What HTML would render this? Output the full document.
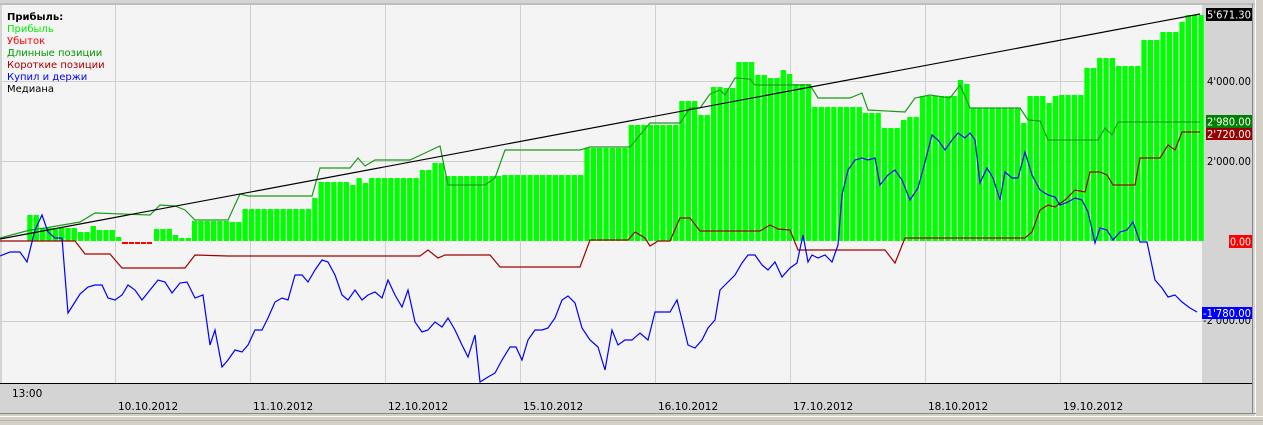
<!DOCTYPE html>
<html><head><meta charset="utf-8"><style>
body{margin:0;width:1263px;height:425px;overflow:hidden;background:#d4d0c8;font-family:"DejaVu Sans","Liberation Sans",sans-serif}
svg{position:absolute;left:0;top:0}
</style></head><body>
<svg id="s" width="1263" height="425" xmlns="http://www.w3.org/2000/svg" font-family="DejaVu Sans, Liberation Sans, sans-serif" font-size="10">
<rect x="0" y="0" width="1263" height="425" fill="#d4d0c8"/>
<rect x="0" y="0" width="1255" height="413" fill="#d4d4d4"/>
<line x1="0" y1="4" x2="1255" y2="4" fill="none" stroke="#a8a8a8"/>
<rect x="2" y="5" width="1200" height="378" fill="#f4f4f4"/>
<g stroke="#d0d0d0" stroke-width="1">
<line x1="115.5" y1="5" x2="115.5" y2="383"/><line x1="250.5" y1="5" x2="250.5" y2="383"/><line x1="385.5" y1="5" x2="385.5" y2="383"/><line x1="520.5" y1="5" x2="520.5" y2="383"/><line x1="655.5" y1="5" x2="655.5" y2="383"/><line x1="790.5" y1="5" x2="790.5" y2="383"/><line x1="925.5" y1="5" x2="925.5" y2="383"/><line x1="1060.5" y1="5" x2="1060.5" y2="383"/>
<line x1="2" y1="81.5" x2="1202" y2="81.5"/><line x1="2" y1="161.5" x2="1202" y2="161.5"/><line x1="2" y1="321.5" x2="1202" y2="321.5"/>
</g>
<g id="bars" fill="#00ff00"></g>
<g stroke="#ff0000" stroke-width="2"><line x1="122" y1="243" x2="128" y2="243"/><line x1="129" y1="243" x2="134" y2="243"/><line x1="135" y1="243" x2="140" y2="243"/><line x1="141" y1="243" x2="146" y2="243"/><line x1="147" y1="243" x2="152" y2="243"/></g>
<polyline id="g" fill="none" stroke="#1a9a1a" stroke-width="1.2"/>
<polyline id="r" fill="none" stroke="#a00000" stroke-width="1.2"/>
<polyline id="b" fill="none" stroke="#0000ff" stroke-width="1.2"/>
<line x1="0" y1="239" x2="1200" y2="14" stroke="#000" stroke-width="1.2"/>
<line x1="0" y1="383.5" x2="1252" y2="383.5" stroke="#000"/>
<line x1="1252.5" y1="4" x2="1252.5" y2="413" stroke="#888"/>
<line x1="1255.5" y1="0" x2="1255.5" y2="416" stroke="#fff"/>
<line x1="0" y1="413.5" x2="1256" y2="413.5" stroke="#888"/>
<line x1="0" y1="416.5" x2="1263" y2="416.5" stroke="#fff"/>
<line x1="0" y1="420.5" x2="1263" y2="420.5" stroke="#b8b4ac"/>
<g>
<text x="7" y="20" font-weight="bold" fill="#000">Прибыль:</text>
<text x="7" y="32" fill="#00ee00">Прибыль</text>
<text x="7" y="44" fill="#ff0000">Убыток</text>
<text x="7" y="56" fill="#009900">Длинные позиции</text>
<text x="7" y="68" fill="#aa0000">Короткие позиции</text>
<text x="7" y="80" fill="#0000ff">Купил и держи</text>
<text x="7" y="92" fill="#000">Медиана</text>
</g>
<g font-size="10.5">
<rect x="1206" y="8" width="46" height="13" fill="#000"/><text x="1207" y="18.5" textLength="44" lengthAdjust="spacingAndGlyphs" fill="#fff">5'671.30</text>
<text x="1207" y="85" textLength="44" lengthAdjust="spacingAndGlyphs" fill="#000">4'000.00</text>
<rect x="1206" y="115" width="46" height="13" fill="#008000"/><text x="1207" y="125.5" textLength="44" lengthAdjust="spacingAndGlyphs" fill="#fff">2'980.00</text>
<rect x="1206" y="128" width="46" height="12" fill="#990000"/><text x="1207" y="138" textLength="44" lengthAdjust="spacingAndGlyphs" fill="#fff">2'720.00</text>
<text x="1207" y="165" textLength="44" lengthAdjust="spacingAndGlyphs" fill="#000">2'000.00</text>
<rect x="1229" y="235" width="23" height="13" fill="#ff0000"/><text x="1230" y="245.5" textLength="21" lengthAdjust="spacingAndGlyphs" fill="#fff">0.00</text>
<text x="1203" y="324" textLength="48" lengthAdjust="spacingAndGlyphs" fill="#000">-2'000.00</text>
<rect x="1202" y="307" width="50" height="12" fill="#0000ff"/><text x="1203" y="317" textLength="48" lengthAdjust="spacingAndGlyphs" fill="#fff">-1'780.00</text>
</g>
<g font-size="10.5" fill="#000">
<text x="12" y="397">13:00</text>
<text x="118" y="410">10.10.2012</text><text x="253" y="410">11.10.2012</text><text x="388" y="410">12.10.2012</text><text x="523" y="410">15.10.2012</text><text x="658" y="410">16.10.2012</text><text x="793" y="410">17.10.2012</text><text x="928" y="410">18.10.2012</text><text x="1063" y="410">19.10.2012</text>
</g>
</svg>
<script>
var R=[[28,42,215],[42,80,228],[80,88,232],[88,95,226],[95,115,230],[115,120,237],[120,155,241],[155,175,229],[175,182,235],[182,195,238],[195,230,221],[230,245,222],[245,310,209],[310,320,198],[320,350,182],[350,358,185],[358,365,178],[365,372,183],[372,420,178],[420,430,170],[430,448,163],[448,500,176],[500,585,175],[585,630,148],[630,650,125],[650,680,125],[680,697,101],[697,710,115],[710,722,87],[722,735,88],[735,755,62],[755,770,75],[770,778,78],[778,790,70],[790,796,74],[796,815,84],[815,860,107],[860,880,113],[880,900,128],[900,906,120],[906,920,117],[920,955,96],[955,965,80],[965,970,84],[970,1022,108],[1022,1030,123],[1030,1044,96],[1044,1050,103],[1050,1062,96],[1062,1085,95],[1085,1097,68],[1097,1117,58],[1117,1142,66],[1142,1160,40],[1160,1178,32],[1178,1184,22],[1184,1202,15]];
var s="",p=6.33;
for(var x=2;x<1202;x+=p){var c=x+p/2,h=null;for(var i=0;i<R.length;i++)if(c>=R[i][0]&&c<R[i][1]){h=R[i][2];break;}
if(h!==null&&h<241)s+='<rect x="'+x.toFixed(1)+'" y="'+h+'" width="'+(p-1).toFixed(2)+'" height="'+(241-h)+'"/>';}
document.getElementById('bars').innerHTML=s;
document.getElementById('g').setAttribute('points',"0,238 30,230 45,228 80,222 95,213 150,215 160,205 175,206 185,210 195,220 228,220 240,194 248,196 312,196 320,168 350,168 358,158 365,166 375,160 410,160 425,153 440,146 448,185 485,185 495,178 505,150 580,150 590,147 630,147 650,123 680,123 690,108 700,108 710,94 720,90 725,95 735,78 750,79 755,85 810,85 818,98 850,98 862,93 868,110 905,112 915,98 930,95 950,98 960,85 970,108 1020,108 1028,120 1040,121 1048,140 1098,140 1105,128 1112,135 1118,122 1200,122");
document.getElementById('r').setAttribute('points',"0,241 75,241 85,254 110,254 122,268 185,268 195,255 228,256 420,256 428,250 438,258 445,255 490,255 500,267 580,267 590,240 628,240 635,232 645,238 650,246 658,241 670,241 680,218 690,218 700,231 760,231 770,225 778,229 790,230 798,250 885,250 895,263 905,238 1025,238 1032,232 1040,210 1048,205 1055,207 1065,200 1075,190 1085,192 1090,172 1100,172 1107,175 1113,185 1135,185 1140,158 1160,158 1168,145 1175,150 1182,132 1200,132");
document.getElementById('b').setAttribute('points',"0,256 10,252 20,252 27,262 35,230 42,215 48,232 55,238 62,238 68,313 75,302 80,294 88,287 95,285 102,285 108,298 115,300 122,295 128,285 135,290 142,300 150,290 158,280 165,282 172,293 180,283 187,282 195,298 203,295 210,345 215,330 222,367 228,360 235,350 242,352 248,345 255,330 262,330 268,318 275,302 282,298 288,300 295,275 302,275 308,282 315,270 322,260 328,262 335,275 342,295 348,300 355,290 362,300 368,295 375,292 382,298 388,280 395,295 402,307 408,290 415,322 422,332 428,330 435,322 442,327 448,318 455,330 462,345 468,357 475,335 480,382 488,377 495,373 502,360 510,347 516,347 522,360 528,340 535,330 542,330 548,328 555,318 562,300 568,296 575,303 582,328 590,340 598,347 605,370 612,330 618,345 625,340 632,340 640,333 648,340 655,312 662,312 670,312 677,300 682,320 688,345 695,348 702,340 708,328 715,320 720,290 728,282 735,275 742,263 748,255 755,255 762,265 768,270 775,262 782,277 790,268 797,263 803,235 808,262 812,255 818,258 825,255 832,262 838,245 842,195 848,170 855,160 862,158 868,160 875,158 880,185 888,175 895,170 902,180 910,200 918,188 925,162 932,135 938,140 945,150 952,140 958,133 965,138 970,133 975,140 980,183 987,168 993,178 1000,200 1005,172 1012,178 1018,178 1025,152 1032,175 1040,190 1048,195 1055,197 1060,205 1068,202 1075,198 1082,200 1088,212 1095,243 1100,228 1107,230 1113,240 1120,232 1127,230 1133,222 1140,242 1147,242 1155,280 1162,288 1168,297 1175,295 1182,302 1190,308 1197,312");
</script>
</body></html>
